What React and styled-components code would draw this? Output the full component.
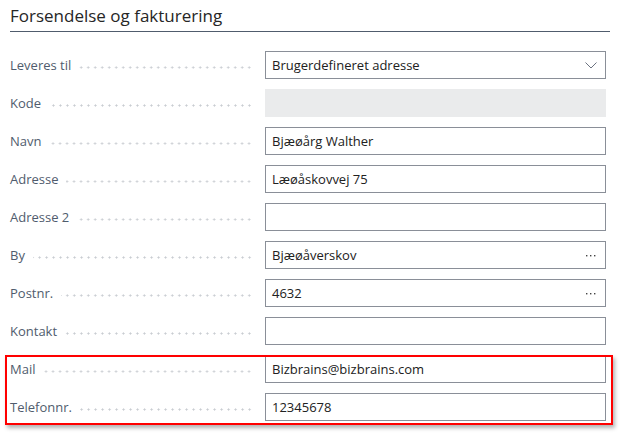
import React from 'react'
import styled, { createGlobalStyle } from 'styled-components'

const GlobalStyle = createGlobalStyle`
  body {
    margin: 0;
    background: #fff;
    font-family: "Segoe UI", "Open Sans", sans-serif;
  }
`

const Page = styled.div`
  width: 625px;
  height: 436px;
  overflow: hidden;
  padding: 0 15px 0 10px;
  box-sizing: border-box;
`

const Heading = styled.h2`
  margin: 0;
  padding-top: 5px;
  height: 26px;
  font-size: 17px;
  font-weight: 400;
  color: #262626;
  border-bottom: 1px solid #505c6d;
  line-height: 22px;
`

const Rows = styled.div`
  display: flex;
  flex-direction: column;
  gap: 10px;
  padding-top: 19px;
`

const Row = styled.div`
  display: grid;
  grid-template-columns: 255px 341px;
  height: 28px;
  align-items: center;
`

const LabelCell = styled.div`
  display: flex;
  align-items: center;
  gap: 8px;
  padding-right: 12px;
`

const Label = styled.span`
  font-size: 13px;
  color: #505c6d;
  white-space: nowrap;
`

const Leader = styled.span`
  flex: 1;
  height: 3px;
  margin-top: 4px;
  background-image: radial-gradient(circle, #c8ccd1 0.9px, transparent 1.2px);
  background-size: 7px 3px;
  background-position: right center;
`

const Field = styled.div`
  height: 28px;
  box-sizing: border-box;
  display: flex;
  align-items: center;
  justify-content: space-between;
  padding: 0 8px 0 6px;
  font-size: 13px;
  color: #212121;
  border: ${p => (p.$disabled ? 'none' : '1px solid #8a8f98')};
  background: ${p => (p.$disabled ? '#eaebec' : '#fff')};
`

const Highlight = styled.div`
  position: relative;
  display: flex;
  flex-direction: column;
  gap: 10px;

  &::after {
    content: '';
    position: absolute;
    top: 0;
    left: -5px;
    right: -3px;
    bottom: -4px;
    border: 2px solid #ff0000;
    box-shadow: 2px 3px 4px rgba(0, 0, 0, 0.3);
    pointer-events: none;
  }
`

const Chevron = () => (
  <svg width="12" height="7" viewBox="0 0 12 7">
    <polyline points="0.5,0.5 6,6 11.5,0.5" fill="none" stroke="#6b7280" strokeWidth="1" />
  </svg>
)

const Ellipsis = () => (
  <svg width="12" height="3" viewBox="0 0 12 3">
    <rect x="1" y="1" width="1.4" height="1.4" fill="#444" />
    <rect x="5" y="1" width="1.4" height="1.4" fill="#444" />
    <rect x="9" y="1" width="1.4" height="1.4" fill="#444" />
  </svg>
)

const fields = [
  { label: 'Leveres til', value: 'Brugerdefineret adresse', icon: 'chevron' },
  { label: 'Kode', value: '', disabled: true },
  { label: 'Navn', value: 'Bjæøårg Walther' },
  { label: 'Adresse', value: 'Læøåskovvej 75' },
  { label: 'Adresse 2', value: '' },
  { label: 'By', value: 'Bjæøåverskov', icon: 'more' },
  { label: 'Postnr.', value: '4632', icon: 'more' },
  { label: 'Kontakt', value: '' }
]

const highlighted = [
  { label: 'Mail', value: 'Bizbrains@bizbrains.com' },
  { label: 'Telefonnr.', value: '12345678' }
]

const FieldRow = ({ label, value, icon, disabled }) => (
  <Row>
    <LabelCell>
      <Label>{label}</Label>
      <Leader />
    </LabelCell>
    <Field $disabled={disabled}>
      <span>{value}</span>
      {icon === 'chevron' && <Chevron />}
      {icon === 'more' && <Ellipsis />}
    </Field>
  </Row>
)

const App = () => (
  <Page>
    <GlobalStyle />
    <Heading>Forsendelse og fakturering</Heading>
    <Rows>
      {fields.map(f => <FieldRow key={f.label} {...f} />)}
      <Highlight>
        {highlighted.map(f => <FieldRow key={f.label} {...f} />)}
      </Highlight>
    </Rows>
  </Page>
)

export default App
